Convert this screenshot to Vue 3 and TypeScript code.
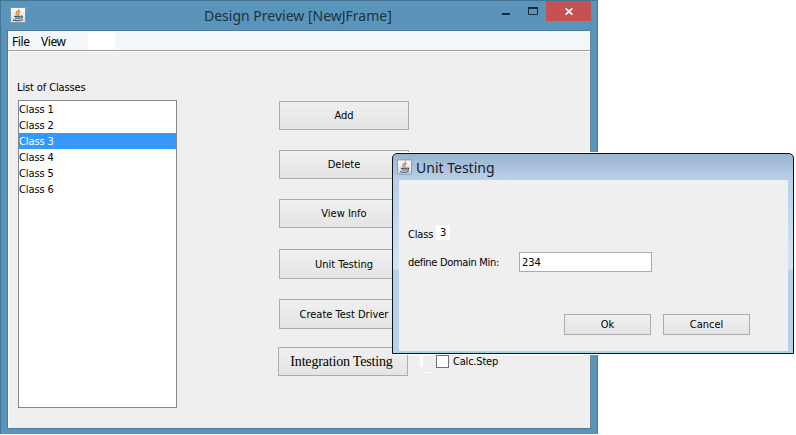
<script setup lang="ts">
import { ref } from 'vue'

interface Action {
  label: string
  kind: string
}

const classes: string[] = ['Class 1', 'Class 2', 'Class 3', 'Class 4', 'Class 5', 'Class 6']
const selected = ref<string>('Class 3')
const domainMin = ref<string>('234')
const actions: Action[] = [
  { label: 'Add', kind: 'add' },
  { label: 'Delete', kind: 'delete' },
  { label: 'View Info', kind: 'info' },
  { label: 'Unit Testing', kind: 'unit' },
  { label: 'Create Test Driver', kind: 'driver' },
  { label: 'Integration Testing', kind: 'integration' },
]
</script>

<template>
  <div class="screen">
    <svg class="symbols" aria-hidden="true">
      <defs>
        <linearGradient id="tile" x1="0" y1="0" x2="0" y2="1">
          <stop offset="0" stop-color="#fbfcfc" />
          <stop offset="1" stop-color="#d5dde2" />
        </linearGradient>
        <symbol id="java" viewBox="0 0 16 16">
          <rect x=".5" y=".5" width="15" height="15" rx="1" fill="url(#tile)" stroke="#8496a2" />
          <path d="M9 2C9.5 3.9 5.9 4.4 6.1 6.1C6.2 7 7.5 7.3 7.3 8.4M10.5 4.3C8.8 4.9 7.9 5.7 8.5 6.6C9 7.3 8.7 7.8 8.3 8.3" fill="none" stroke="#d5762c" stroke-width="1.2" />
          <path d="M4 9.4H10.6M5 11.2H10.2M10.8 9.2C13.4 8.5 12.7 11 10.4 11.2M3 12.9C5.2 14 10.6 13.9 12.8 12.6" fill="none" stroke="#46606f" stroke-width="1.2" />
        </symbol>
      </defs>
    </svg>

    <section class="frame">
      <header class="titlebar">
        <svg class="java"><use href="#java" /></svg>
        <h1>Design Preview [NewJFrame]</h1>
        <div class="controls">
          <button class="ctl" aria-label="Minimize">
            <svg width="8" height="15"><path d="M0 13H8" stroke="#182b38" stroke-width="2" /></svg>
          </button>
          <button class="ctl max" aria-label="Maximize">
            <svg width="10" height="8"><path d="M.5 1V7.5H9.5V1" fill="none" stroke="#182b38" /><path d="M0 1H10" stroke="#182b38" stroke-width="2" /></svg>
          </button>
          <button class="ctl close" aria-label="Close">
            <svg width="8" height="7"><path d="M.7 .4L7.3 6.6M7.3 .4L.7 6.6" stroke="#fff" stroke-width="1.7" /></svg>
          </button>
        </div>
      </header>
      <div class="client">
        <nav class="menubar">
          <span class="menu file">File</span>
          <span class="menu view">View</span>
          <span class="blank"></span>
        </nav>
        <main class="content">
          <div class="list-panel">
            <label class="list-label">List of Classes</label>
            <ul class="list">
              <li v-for="c in classes" :key="c" :class="{ selected: c === selected }" @click="selected = c">{{ c }}</li>
            </ul>
          </div>
          <div class="actions">
            <button v-for="a in actions" :key="a.kind" class="btn" :class="a.kind"><span>{{ a.label }}</span></button>
          </div>
          <div class="step">
            <span class="mark"></span>
            <span class="dash"></span>
            <label class="check"><i class="box"></i><span>Calc.Step</span></label>
          </div>
        </main>
      </div>
    </section>

    <section class="dialog">
      <header class="dialog-title">
        <svg class="java"><use href="#java" /></svg>
        <h2>Unit Testing</h2>
      </header>
      <div class="dialog-body">
        <div class="class-row"><span class="word">Class</span><span class="number">3</span></div>
        <div class="field-row">
          <label>define Domain Min:</label>
          <input v-model="domainMin" type="text" />
        </div>
        <div class="dialog-actions">
          <button class="btn ok"><span>Ok</span></button>
          <button class="btn cancel"><span>Cancel</span></button>
        </div>
      </div>
    </section>
  </div>
</template>

<style>
body {
  background: #fff;
  overflow: hidden;
}
</style>

<style scoped>
* {
  box-sizing: border-box;
}
.screen {
  position: relative;
  width: 796px;
  height: 435px;
  overflow: hidden;
  background: #fff;
  color: #000;
  font: 11px/16px 'DejaVu Sans Condensed', 'Noto Sans', sans-serif;
}
.symbols {
  position: absolute;
  width: 0;
  height: 0;
}
.java {
  flex: none;
  width: 16px;
  height: 16px;
}
h1,
h2 {
  margin: 0;
  font-weight: 400;
  font-family: 'Noto Sans', sans-serif;
  white-space: nowrap;
}
.frame {
  display: flex;
  flex-direction: column;
  width: 598px;
  height: 434px;
  padding: 0 6px 5px 6px;
  border: 1px solid #437594;
  border-bottom: 0;
  background: #5b94ba;
}
.titlebar {
  display: flex;
  height: 29px;
  padding-left: 3px;
}
.titlebar .java {
  margin-top: 6px;
}
h1 {
  width: 189px;
  margin: 4px 0 0 178px;
  color: #1b3342;
  font-size: 14px;
  line-height: 21px;
}
.controls {
  display: flex;
  margin-left: auto;
}
.ctl {
  display: flex;
  padding: 0;
  border: 0;
  background: none;
}
.max {
  margin: 6px 8px 0 18px;
}
.close {
  width: 45px;
  height: 20px;
  align-items: center;
  justify-content: center;
  background: #c75050;
}
.client {
  display: flex;
  flex: 1;
  flex-direction: column;
  border: 1px solid #4d7c9b;
  border-right-color: #6d8797;
  background: #efefef;
}
.menubar {
  display: flex;
  height: 20px;
  border-bottom: 1px solid #a0a0a0;
  background: #f3f7fa;
}
.menu {
  font: 12px/21px 'Noto Sans', sans-serif;
  letter-spacing: -0.4px;
  white-space: nowrap;
}
.file {
  width: 29px;
  padding-left: 4px;
}
.view {
  width: 51px;
  padding-left: 4px;
}
.blank {
  width: 27px;
  height: 17px;
  margin-top: 1px;
  background: #fff;
}
.content {
  display: flex;
  flex: 1;
  border-top: 1px solid #fff;
  border-left: 1px solid #f8fafb;
  padding-left: 8px;
}
.list-panel {
  width: 261px;
  padding-top: 28px;
}
.list-label {
  display: block;
  height: 20px;
  letter-spacing: -0.12px;
}
.list {
  width: 159px;
  height: 308px;
  margin: 0 0 0 1px;
  padding: 0;
  border: 1px solid #85878c;
  background: #fff;
  line-height: 18px;
  list-style: none;
}
.list li {
  height: 16px;
  letter-spacing: -0.1px;
}
.list .selected {
  outline: 1px dotted #a5804f;
  outline-offset: -1px;
  background: #3399ff;
  color: #fff;
}
.actions {
  width: 132px;
  padding-top: 49px;
}
.btn {
  display: flex;
  align-items: center;
  justify-content: center;
  padding: 0;
  border: 1px solid #acacac;
  background: linear-gradient(#f0f0f0, #e4e4e4);
  color: #000;
  font: inherit;
  white-space: nowrap;
}
.actions .btn {
  width: 130px;
  height: 29px;
  margin: 0 0 20px 1px;
}
.actions .info {
  margin-bottom: 21px;
}
.actions .unit,
.actions .driver {
  height: 30px;
  padding-top: 1px;
}
.actions .driver {
  margin-bottom: 18px;
}
.actions .integration {
  margin-left: 0;
  padding: 1px 3px 0 0;
  font: 14px/16px 'Liberation Serif', serif;
  letter-spacing: -0.18px;
}
.step {
  display: grid;
  grid-template-columns: 3px 10px auto;
  align-items: start;
  padding: 303px 0 0 10px;
}
.mark {
  width: 3px;
  height: 12px;
  background: #fff;
}
.dash {
  width: 10px;
  height: 1px;
  margin-top: 17px;
  background: #fff;
}
.check {
  display: flex;
  margin-left: 3px;
}
.box {
  width: 13px;
  height: 13px;
  margin-right: 4px;
  border: 1px solid #707070;
  background: #fff;
}
.check span {
  margin-top: -1px;
  letter-spacing: -0.2px;
}
.dialog {
  position: absolute;
  top: 153px;
  left: 392px;
  display: flex;
  flex-direction: column;
  width: 402px;
  height: 201px;
  padding: 0 5px 0 6px;
  border: 1px solid #0b141b;
  border-radius: 5px 5px 0 0;
  box-shadow: 0 -1px #fff, 0 1px #fff;
  background: linear-gradient(#9ab4cf 0, #bad0e9 26px, #bcd4eb 45px, #d3e5f5 115px, #b9d1e6 116px);
}
.dialog-title {
  display: flex;
  height: 26px;
  margin-left: -2px;
}
.dialog-title .java {
  width: 15px;
  margin-top: 5px;
}
h2 {
  margin: 3px 0 0 4px;
  color: #15202a;
  font-size: 14px;
  line-height: 21px;
}
.dialog-body {
  flex: 1;
  padding: 46px 0 0 9px;
  border-bottom: 2px solid #a6d3e2;
  background: #efefef;
}
.class-row {
  display: flex;
  height: 17px;
}
.word {
  width: 28px;
  padding-top: 1px;
  letter-spacing: -0.15px;
}
.number {
  width: 14px;
  height: 15px;
  margin-top: -1px;
  padding-left: 4px;
  background: #fff;
}
.field-row {
  display: flex;
  align-items: center;
  height: 20px;
  margin-top: 9px;
}
.field-row label {
  width: 111px;
  padding-top: 1px;
  letter-spacing: -0.31px;
  white-space: nowrap;
}
.field-row input {
  width: 133px;
  height: 20px;
  padding: 0 2px;
  border: 1px solid #ababab;
  background: #fff;
  color: #000;
  font: inherit;
}
.dialog-actions {
  display: flex;
  gap: 12px;
  margin: 42px 0 0 156px;
}
.dialog-actions .btn {
  width: 87px;
  height: 21px;
}
</style>
